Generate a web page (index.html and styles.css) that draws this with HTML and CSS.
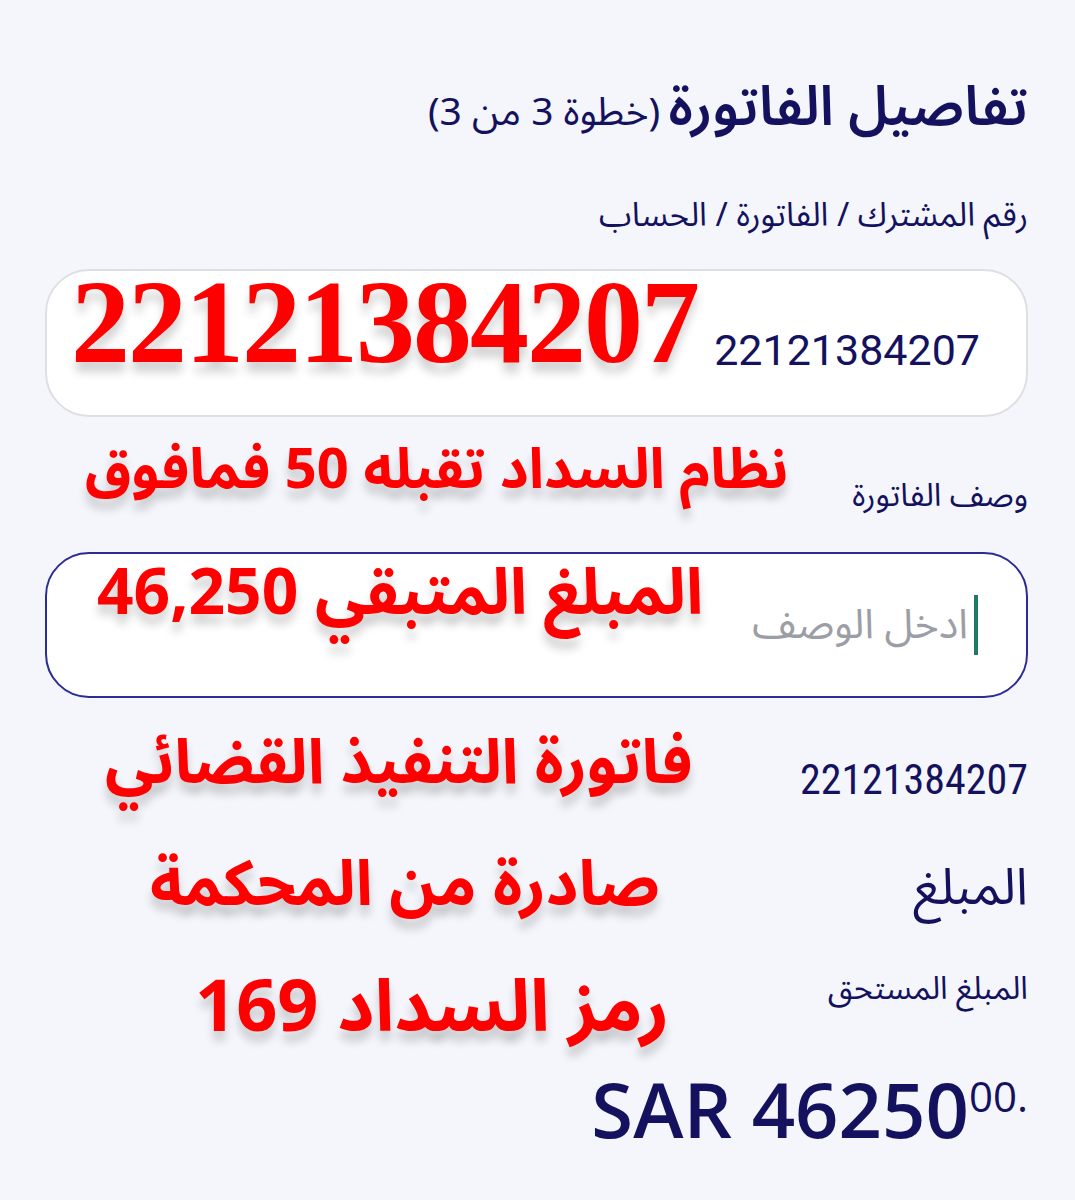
FILE: index.html
```html
<!DOCTYPE html>
<html lang="ar" dir="rtl">
<head>
  <meta charset="UTF-8" />
  <meta name="viewport" content="width=device-width, initial-scale=1.0" />
  <title>تفاصيل الفاتورة</title>
  <link rel="stylesheet" href="styles.css">
</head>
<body>
  <main class="page">
    <h1 class="title">
      <span class="title-main">تفاصيل الفاتورة</span>
      <span class="title-step">(خطوة 3 من 3)</span>
    </h1>

    <div class="field-label">رقم المشترك / الفاتورة / الحساب</div>
    <div class="field field-readonly">
      <span class="field-value">22121384207</span>
      <span class="stamp stamp-number">22121384207</span>
    </div>

    <div class="row row-desc">
      <div class="row-label small">وصف الفاتورة</div>
      <div class="stamp-cell"><span class="stamp">نظام السداد تقبله 50 فمافوق</span></div>
    </div>
    <div class="field field-focus">
      <span class="caret"></span>
      <span class="placeholder">ادخل الوصف</span>
      <span class="stamp stamp-remaining">المبلغ المتبقي 46,250</span>
    </div>

    <div class="row row-ref">
      <div class="row-label number">22121384207</div>
      <div class="stamp-cell"><span class="stamp">فاتورة التنفيذ القضائي</span></div>
    </div>
    <div class="row row-amount">
      <div class="row-label big">المبلغ</div>
      <div class="stamp-cell"><span class="stamp">صادرة من المحكمة</span></div>
    </div>
    <div class="row row-due">
      <div class="row-label small">المبلغ المستحق</div>
      <div class="stamp-cell"><span class="stamp">رمز السداد 169</span></div>
    </div>

    <div class="total" dir="ltr">SAR 46250<sup>00.</sup></div>
  </main>
</body>
</html>
```

FILE: styles.css
```css
body {
  margin: 0;
  background: #f5f6fb;
  color: #14125e;
  font-family: "Noto Sans Arabic", "Noto Naskh Arabic", "DejaVu Sans", sans-serif;
}
.page {
  padding: 72px 47px 40px 45px;
}
.title {
  margin: 0;
  font-weight: normal;
  line-height: 72px;
}
.title-main {
  font-size: 55px;
  font-weight: 600;
}
.title-step {
  font-size: 39px;
}
.field-label {
  margin-top: 42px;
  font-size: 33px;
  line-height: 46px;
}
.field {
  position: relative;
  display: flex;
  align-items: center;
  background: #fff;
  border-radius: 44px;
  box-sizing: border-box;
}
.field-readonly {
  margin-top: 30px;
  height: 148px;
  border: 2px solid #dedfe4;
  padding-right: 46px;
}
.field-value {
  font-family: Roboto, "Noto Sans", sans-serif;
  font-size: 43px;
  margin-top: 14px;
}
.field-focus {
  margin-top: 33px;
  height: 146px;
  border: 2px solid #2c2c96;
  padding-right: 48px;
}
.caret {
  width: 4px;
  height: 60px;
  background: #1f7a66;
  margin-left: 6px;
}
.placeholder {
  color: #9c9ea6;
  font-size: 41px;
}
.stamp {
  display: block;
  color: #ff0000;
  font-weight: bold;
  font-size: 56px;
  line-height: 1;
  white-space: nowrap;
  text-shadow: 0 10px 10px rgba(0, 0, 0, 0.18);
}
.field .stamp {
  position: absolute;
}
.stamp-number {
  left: 24px;
  top: -7px;
  font-family: "Liberation Serif", "DejaVu Serif", serif;
  font-size: 118px;
  letter-spacing: -2px;
}
.stamp-remaining {
  left: 50px;
  top: 8px;
  font-size: 64px;
}

/* label on the right, pasted red note on the left */
.row {
  display: grid;
  grid-template-columns: 1fr auto;
  align-items: start;
}
.row-label {
  white-space: nowrap;
  line-height: 1.4;
}
.row-label.small {
  font-size: 32px;
}
.row-label.number {
  font-family: "Roboto Condensed", "Liberation Sans Narrow", sans-serif;
  font-size: 42px;
  line-height: 1.2;
}
.row-label.big {
  font-size: 51px;
}
.row-desc {
  margin-top: 17px;
}
.row-desc .row-label {
  margin-top: 40px;
}
.row-desc .stamp-cell {
  margin: 8px 0 0 40px;
}
.row-ref {
  margin-top: 25px;
}
.row-ref .row-label {
  margin-top: 32px;
}
.row-ref .stamp-cell {
  margin: 10px 0 0 60px;
}
.row-ref .stamp {
  font-size: 62px;
}
.row-amount {
  margin-top: 38px;
}
.row-amount .row-label {
  margin-top: 10px;
}
.row-amount .stamp-cell {
  margin: 10px 0 0 105px;
}
.row-amount .stamp {
  font-size: 63px;
}
.row-due {
  margin-top: 37px;
}
.row-due .row-label {
  margin-top: 5px;
}
.row-due .stamp-cell {
  margin: 10px 0 0 150px;
}
.row-due .stamp {
  font-size: 72px;
}
.total {
  text-align: right;
  font-family: "Open Sans", "Noto Sans", sans-serif;
  font-size: 76px;
  font-weight: 600;
  margin-top: 7px;
  line-height: 90px;
}
.total sup {
  font-size: 42px;
  font-weight: normal;
  vertical-align: 26px;
}
```
